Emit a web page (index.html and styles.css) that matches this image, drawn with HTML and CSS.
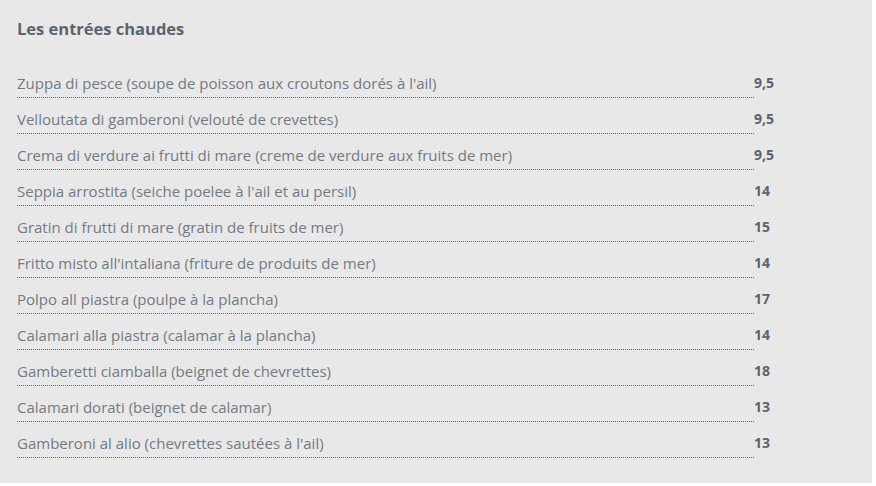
FILE: index.html
```html
<!DOCTYPE html>
<html lang="fr">
<head>
<meta charset="utf-8">
<title>Les entrées chaudes</title>
<link rel="stylesheet" href="styles.css">
</head>
<body>
<section class="menu">
  <h2 class="menu-title">Les entrées chaudes</h2>
  <ul class="menu-list">
    <li class="menu-item"><span class="item-name">Zuppa di pesce (soupe de poisson aux croutons dorés à l'ail)</span><span class="item-price">9,5</span></li>
    <li class="menu-item"><span class="item-name">Velloutata di gamberoni (velouté de crevettes)</span><span class="item-price">9,5</span></li>
    <li class="menu-item"><span class="item-name">Crema di verdure ai frutti di mare (creme de verdure aux fruits de mer)</span><span class="item-price">9,5</span></li>
    <li class="menu-item"><span class="item-name">Seppia arrostita (seiche poelee à l'ail et au persil)</span><span class="item-price">14</span></li>
    <li class="menu-item"><span class="item-name">Gratin di frutti di mare (gratin de fruits de mer)</span><span class="item-price">15</span></li>
    <li class="menu-item"><span class="item-name">Fritto misto all'intaliana (friture de produits de mer)</span><span class="item-price">14</span></li>
    <li class="menu-item"><span class="item-name">Polpo all piastra (poulpe à la plancha)</span><span class="item-price">17</span></li>
    <li class="menu-item"><span class="item-name">Calamari alla piastra (calamar à la plancha)</span><span class="item-price">14</span></li>
    <li class="menu-item"><span class="item-name">Gamberetti ciamballa (beignet de chevrettes)</span><span class="item-price">18</span></li>
    <li class="menu-item"><span class="item-name">Calamari dorati (beignet de calamar)</span><span class="item-price">13</span></li>
    <li class="menu-item"><span class="item-name">Gamberoni al alio (chevrettes sautées à l'ail)</span><span class="item-price">13</span></li>
  </ul>
</section>
</body>
</html>
```
FILE: styles.css
```css
html, body {
  margin: 0;
  padding: 0;
  background: #ffffff;
}
.menu {
  width: 872px;
  box-sizing: border-box;
  background: #e8e8e8;
  padding: 14px 17px 25px;
  font-family: "Open Sans", "Noto Sans", sans-serif;
}
.menu-title {
  margin: 0 0 18px;
  font-size: 16.5px;
  line-height: 30px;
  font-weight: 700;
  color: #5c6370;
}
.menu-list {
  list-style: none;
  margin: 0;
  padding: 0;
}
.menu-item {
  display: grid;
  grid-template-columns: 737px 1fr;
  align-items: start;
}
.item-name {
  padding: 11px 0 4px;
  line-height: 20px;
  font-size: 15px;
  font-weight: 400;
  color: #737a86;
  border-bottom: 1px dotted #5f6570;
}
.item-price {
  padding-top: 11px;
  line-height: 20px;
  font-size: 14px;
  font-weight: 700;
  color: #5b6270;
}
```
